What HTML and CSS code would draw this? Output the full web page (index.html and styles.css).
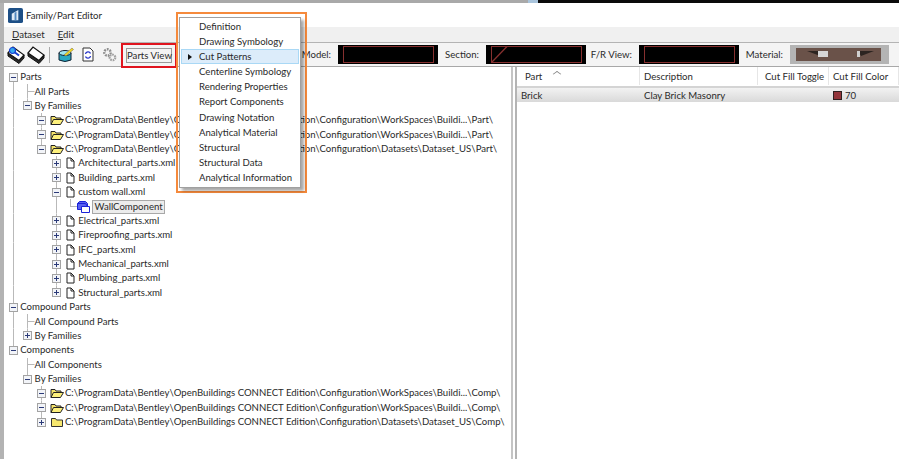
FILE: index.html
```html
<!DOCTYPE html>
<html lang="en">

<head>
    <meta charset="UTF-8">
    <title>Family/Part Editor</title>
    <link rel="stylesheet" href="styles.css">
</head>

<body>
    <svg class="defs" width="0" height="0">
        <symbol id="folderOpen" viewBox="0 0 14 12">
            <path d="M1 10.500V2.500h4l1 1.500h5v2" fill="#f4e36a" stroke="#222" />
            <path d="M1 10.500l2.500-5h10l-3 5z" fill="#fdf07c" stroke="#222" />
        </symbol>
        <symbol id="folderShut" viewBox="0 0 14 12">
            <path d="M1.500 10.500V2.500h4l1 1.500h6v6.500z" fill="#f6e76e" stroke="#333" />
        </symbol>
        <symbol id="file" viewBox="0 0 11 12">
            <path d="M2 1h4l3 3v7H2z" fill="#fff" stroke="#222" />
            <path d="M6 1v3h3" fill="none" stroke="#222" />
        </symbol>
        <symbol id="part" viewBox="0 0 13 12">
            <path d="M.5 2.500l2-2h6l2 2v6h-10z" fill="#5a62f0" stroke="#1a22d8" />
            <path d="M4.500 5.500h8v6h-8z" fill="#fff" stroke="#1a22d8" />
            <path d="M.5 2.500h8l2 3" fill="none" stroke="#1a22d8" />
        </symbol>
        <symbol id="book" viewBox="0 0 18 18">
            <path d="M1 7v3l11 7.500 5-5.500V9l-5 5.500z" fill="#2b2b2b" stroke="#111" />
            <path d="M1 7l5-6 11 8-5 5.500z" fill="#fff" stroke="#111" stroke-width="1.200" />
        </symbol>
    </svg>

    <div class="topstrip">
        <div class="strip_gray"></div>
        <div class="strip_blue"></div>
        <div class="strip_black"></div>
    </div>

    <div class="vindue">
        <header class="titel">
            <svg class="logo" viewBox="0 0 16 16" width="15" height="15">
                <rect width="16" height="16" rx="2" fill="#1d4f86" />
                <path d="M4 13V6l7-4v11z" fill="#dfe9f5" />
                <path d="M7 13V5l2-1v9z" fill="#4f86c0" />
            </svg>
            <span>Family/Part Editor</span>
        </header>

        <nav class="menu">
            <span><u>D</u>ataset</span>
            <span><u>E</u>dit</span>
        </nav>

        <div class="toolbar">
            <svg class="ikon bog_a" width="18" height="18">
                <use href="#book" />
                <circle cx="5.500" cy="4.500" r="3" fill="#35a8f0" stroke="#1540d0" stroke-width="1.200" />
                <path d="M8 6.500l4 3" stroke="#1540d0" stroke-width="2" />
            </svg>
            <svg class="ikon bog_b" width="18" height="18">
                <use href="#book" />
            </svg>
            <div class="skille"></div>
            <svg class="ikon kop" viewBox="0 0 16 16" width="16" height="16">
                <path d="M1 6v7q6 3 12 0V6z" fill="#28a8c0" stroke="#123" />
                <ellipse cx="7" cy="6" rx="6" ry="2.500" fill="#9fe4ee" stroke="#123" />
                <path d="M6 8l8-7 1.500 1.500L8 9z" fill="#f5d820" stroke="#665" stroke-width=".5" />
            </svg>
            <svg class="ikon dok" viewBox="0 0 12 15" width="12" height="15">
                <path d="M1 1h7l3 3v10H1z" fill="#fff" stroke="#333" />
                <path d="M3.500 7a2.600 2.600 0 0 1 5-.5M8.500 9a2.600 2.600 0 0 1-5 .5" fill="none" stroke="#2230c8" stroke-width="1.300" />
            </svg>
            <svg class="ikon tandhjul" viewBox="0 0 15 15" width="15" height="15">
                <circle cx="5.500" cy="5.500" r="3.200" fill="none" stroke="#8d8d8d" stroke-width="2.400" stroke-dasharray="1.800 1" />
                <circle cx="10.500" cy="10.500" r="2.800" fill="none" stroke="#a0a0a0" stroke-width="2.200" stroke-dasharray="1.600 .9" />
            </svg>

            <div class="rod_ramme">
                <button class="partsview">Parts View</button>
            </div>

            <span class="felt model">Model:</span>
            <div class="sort_boks">
                <svg viewBox="0 0 100 19" width="100" height="19">
                    <rect x="5.500" y="1.500" width="90" height="16" fill="none" stroke="#86302f" />
                </svg>
            </div>
            <span class="felt section">Section:</span>
            <div class="sort_boks">
                <svg viewBox="0 0 100 19" width="100" height="19">
                    <rect x="5.500" y="1.500" width="90" height="16" fill="none" stroke="#86302f" />
                    <path d="M5.500 17.500L21 1.500" stroke="#86302f" stroke-width="1.300" />
                </svg>
            </div>
            <span class="felt frview">F/R View:</span>
            <div class="sort_boks">
                <svg viewBox="0 0 100 19" width="100" height="19">
                    <rect x="5.500" y="1.500" width="90" height="16" fill="none" stroke="#86302f" />
                </svg>
            </div>
            <span class="felt material">Material:</span>
            <svg class="materiale" viewBox="0 0 99 19" width="99" height="19">
                <rect width="99" height="19" fill="#b4b4b4" />
                <rect x="6" y="3" width="85" height="13" fill="#6a5249" />
                <path d="M17 6l16 0 0 6z" fill="#2c2420" />
                <rect x="28" y="6" width="10" height="6" fill="#d6d6d6" />
                <path d="M68 6h16l-13 5z" fill="#2c2420" />
                <rect x="67" y="6" width="3" height="6" fill="#cfcfcf" />
            </svg>
        </div>

        <main class="ruder">
            <section class="trae">
                <div class="r"><i class="c down"><b class="boks minus"></b></i><span>Parts</span></div>
                <div class="r"><i class="c v"></i><i class="c t"></i><span>All Parts</span></div>
                <div class="r"><i class="c v"></i><i class="c l0"><b class="boks minus"></b></i><span>By Families</span></div>
                <div class="r"><i class="c v"></i><i class="c"></i><i class="c v"><b class="boks minus"></b></i><svg class="fil_ikon"><use href="#folderOpen" /></svg><span>C:\ProgramData\Bentley\OpenBuildings CONNECT Edition\Configuration\WorkSpaces\Buildi...\Part\</span></div>
                <div class="r"><i class="c v"></i><i class="c"></i><i class="c v"><b class="boks minus"></b></i><svg class="fil_ikon"><use href="#folderOpen" /></svg><span>C:\ProgramData\Bentley\OpenBuildings CONNECT Edition\Configuration\WorkSpaces\Buildi...\Part\</span></div>
                <div class="r"><i class="c v"></i><i class="c"></i><i class="c up"><b class="boks minus"></b></i><svg class="fil_ikon"><use href="#folderOpen" /></svg><span>C:\ProgramData\Bentley\OpenBuildings CONNECT Edition\Configuration\Datasets\Dataset_US\Part\</span></div>
                <div class="r"><i class="c v"></i><i class="c"></i><i class="c"></i><i class="c v"><b class="boks plus"></b></i><svg class="doc_ikon"><use href="#file" /></svg><span>Architectural_parts.xml</span></div>
                <div class="r"><i class="c v"></i><i class="c"></i><i class="c"></i><i class="c v"><b class="boks plus"></b></i><svg class="doc_ikon"><use href="#file" /></svg><span>Building_parts.xml</span></div>
                <div class="r"><i class="c v"></i><i class="c"></i><i class="c"></i><i class="c v"><b class="boks minus"></b></i><svg class="doc_ikon"><use href="#file" /></svg><span>custom wall.xml</span></div>
                <div class="r"><i class="c v"></i><i class="c"></i><i class="c"></i><i class="c v"></i><i class="c l"></i><svg class="part_ikon"><use href="#part" /></svg><span class="valgt">WallComponent</span></div>
                <div class="r"><i class="c v"></i><i class="c"></i><i class="c"></i><i class="c v"><b class="boks plus"></b></i><svg class="doc_ikon"><use href="#file" /></svg><span>Electrical_parts.xml</span></div>
                <div class="r"><i class="c v"></i><i class="c"></i><i class="c"></i><i class="c v"><b class="boks plus"></b></i><svg class="doc_ikon"><use href="#file" /></svg><span>Fireproofing_parts.xml</span></div>
                <div class="r"><i class="c v"></i><i class="c"></i><i class="c"></i><i class="c v"><b class="boks plus"></b></i><svg class="doc_ikon"><use href="#file" /></svg><span>IFC_parts.xml</span></div>
                <div class="r"><i class="c v"></i><i class="c"></i><i class="c"></i><i class="c v"><b class="boks plus"></b></i><svg class="doc_ikon"><use href="#file" /></svg><span>Mechanical_parts.xml</span></div>
                <div class="r"><i class="c v"></i><i class="c"></i><i class="c"></i><i class="c v"><b class="boks plus"></b></i><svg class="doc_ikon"><use href="#file" /></svg><span>Plumbing_parts.xml</span></div>
                <div class="r"><i class="c v"></i><i class="c"></i><i class="c"></i><i class="c up"><b class="boks plus"></b></i><svg class="doc_ikon"><use href="#file" /></svg><span>Structural_parts.xml</span></div>
                <div class="r"><i class="c v"><b class="boks minus"></b></i><span>Compound Parts</span></div>
                <div class="r"><i class="c v"></i><i class="c t"></i><span>All Compound Parts</span></div>
                <div class="r"><i class="c v"></i><i class="c l0"><b class="boks plus"></b></i><span>By Families</span></div>
                <div class="r"><i class="c up"><b class="boks minus"></b></i><span>Components</span></div>
                <div class="r"><i class="c"></i><i class="c t"></i><span>All Components</span></div>
                <div class="r"><i class="c"></i><i class="c l0"><b class="boks minus"></b></i><span>By Families</span></div>
                <div class="r"><i class="c"></i><i class="c"></i><i class="c v"><b class="boks minus"></b></i><svg class="fil_ikon"><use href="#folderOpen" /></svg><span>C:\ProgramData\Bentley\OpenBuildings CONNECT Edition\Configuration\WorkSpaces\Buildi...\Comp\</span></div>
                <div class="r"><i class="c"></i><i class="c"></i><i class="c v"><b class="boks minus"></b></i><svg class="fil_ikon"><use href="#folderOpen" /></svg><span>C:\ProgramData\Bentley\OpenBuildings CONNECT Edition\Configuration\WorkSpaces\Buildi...\Comp\</span></div>
                <div class="r"><i class="c"></i><i class="c"></i><i class="c up"><b class="boks plus"></b></i><svg class="fil_ikon"><use href="#folderShut" /></svg><span>C:\ProgramData\Bentley\OpenBuildings CONNECT Edition\Configuration\Datasets\Dataset_US\Comp\</span></div>
            </section>

            <div class="splitter"></div>

            <section class="liste">
                <div class="kolonner hoved">
                    <div class="kol_part">Part <span class="pil"></span></div>
                    <div class="kol_desc">Description</div>
                    <div class="kol_tog">Cut Fill Toggle</div>
                    <div class="kol_col">Cut Fill Color</div>
                </div>
                <div class="kolonner raekke">
                    <div class="kol_part">Brick</div>
                    <div class="kol_desc">Clay Brick Masonry</div>
                    <div class="kol_tog"></div>
                    <div class="kol_col"><span class="farve"></span>70</div>
                </div>
            </section>
        </main>
    </div>

    <!-- dropdown fra Parts View knappen -->
    <div class="orange_ramme">
        <ul class="dropdown">
            <li>Definition</li>
            <li>Drawing Symbology</li>
            <li class="aktiv">Cut Patterns</li>
            <li>Centerline Symbology</li>
            <li>Rendering Properties</li>
            <li>Report Components</li>
            <li>Drawing Notation</li>
            <li>Analytical Material</li>
            <li>Structural</li>
            <li>Structural Data</li>
            <li>Analytical Information</li>
        </ul>
    </div>
</body>

</html>
```

FILE: styles.css
```css
* {
    margin: 0;
    padding: 0;
    box-sizing: border-box;
}

body {
    width: 899px;
    height: 459px;
    overflow: hidden;
    display: flex;
    flex-direction: column;
    background: #fff;
    color: #2a2a2a;
    font-family: Lato, sans-serif;
    font-size: 9.6px;
}

.defs {
    display: block;
    height: 0;
}

.topstrip {
    display: flex;
    height: 3px;
    flex: none;
}

.strip_gray {
    width: 528px;
    background: #a9a9a9;
}

.strip_blue {
    width: 10px;
    background: #a9c4dc;
}

.strip_black {
    flex: 1;
    background: #0b0b0b;
}

.vindue {
    flex: 1;
    min-height: 0;
    display: flex;
    flex-direction: column;
    border-left: 4px solid #b3b3b3;
}

.titel {
    height: 24px;
    flex: none;
    display: flex;
    align-items: center;
    gap: 3px;
    padding: 0 0 0 4px;
}

.menu {
    height: 15px;
    flex: none;
    display: flex;
    align-items: center;
    gap: 13px;
    padding-left: 8px;
    background: #f0f0f0;
}

.toolbar {
    height: 25px;
    flex: none;
    display: flex;
    align-items: center;
    background: #f4f4f4;
    border-top: 1px solid #b4b4b4;
    border-bottom: 1px solid #a8a8a8;
}

.ikon {
    flex: none;
}

.bog_a {
    margin-left: 3px;
}

.bog_b {
    margin-left: 2px;
}

.skille {
    width: 1px;
    height: 16px;
    margin: 0 8px 0 4px;
    background: #aaa;
}

.dok {
    margin-left: 8px;
}

.tandhjul {
    margin-left: 8px;
}

.rod_ramme {
    width: 56px;
    height: 25px;
    margin-left: 4px;
    display: flex;
    align-items: center;
    justify-content: center;
    border: 2px solid #e0141e;
    margin-top: 1px;
    flex: none;
}

.partsview {
    width: 46px;
    height: 15px;
    border: 1px solid #9a9a9a;
    background: #f4f4f4;
    color: #2a2a2a;
    font: 9.6px Lato, sans-serif;
    white-space: nowrap;
}

/* labels staar hoejrestillet saa de sorte felter holder deres plads */
.felt {
    flex: none;
    margin-right: 7px;
    text-align: right;
    white-space: nowrap;
}

.model {
    width: 154px;
}

.section {
    width: 41px;
}

.frview {
    width: 46px;
}

.material {
    width: 44px;
}

.sort_boks {
    width: 100px;
    height: 19px;
    flex: none;
    background: #000;
}

.sort_boks svg,
.materiale {
    display: block;
    flex: none;
}

.ruder {
    flex: 1;
    min-height: 0;
    display: flex;
}

.trae {
    width: 507px;
    flex: none;
    padding: 3px 0 0 2px;
}

.r {
    height: 14.375px;
    display: flex;
    align-items: center;
    white-space: nowrap;
    line-height: 14px;
}

/* traeets linjer tegnes som baggrunde i hver celle */
.c {
    --linje: linear-gradient(#b9b9b9, #b9b9b9);
    width: 14.3px;
    height: 14.375px;
    flex: none;
    display: flex;
    align-items: center;
    justify-content: center;
    background-repeat: no-repeat;
}

.v {
    background-image: var(--linje);
    background-size: 1px 100%;
    background-position: center;
}

.down {
    background-image: var(--linje);
    background-size: 1px 50%;
    background-position: center bottom;
}

.up {
    background-image: var(--linje);
    background-size: 1px 50%;
    background-position: center top;
}

.t {
    background-image: var(--linje), var(--linje);
    background-size: 1px 100%, 50% 1px;
    background-position: center, right center;
}

.l {
    background-image: var(--linje), var(--linje);
    background-size: 1px 50%, 50% 1px;
    background-position: center top, right center;
}

.l0 {
    background-image: var(--linje);
    background-size: 1px 50%;
    background-position: center top;
}

.boks {
    width: 9px;
    height: 9px;
    border: 1px solid #a3a3a3;
    background-color: #f2f4f8;
    background-repeat: no-repeat;
    background-position: center;
}

.minus {
    background-image: linear-gradient(#2b3a78, #2b3a78);
    background-size: 5px 1px;
}

.plus {
    background-image: linear-gradient(#2b3a78, #2b3a78), linear-gradient(#2b3a78, #2b3a78);
    background-size: 5px 1px, 1px 5px;
}

.fil_ikon {
    width: 14px;
    height: 12px;
    margin: 0 1px 0 1px;
    flex: none;
}

.doc_ikon {
    width: 11px;
    height: 12px;
    margin: 0 2px 0 2px;
    flex: none;
}

.part_ikon {
    width: 13px;
    height: 12px;
    margin-right: 2px;
    flex: none;
}

.valgt {
    padding: 0 1px;
    background: #ececec;
    border: 1px solid #a8a8a8;
    line-height: 12px;
}

.splitter {
    width: 6px;
    flex: none;
    border-left: 2px solid #c4c4c4;
    border-right: 2px solid #b4b4b4;
}

.liste {
    flex: 1;
}

.kolonner {
    display: grid;
    grid-template-columns: 123px 118px 71px 1fr;
}

.hoved {
    height: 21px;
    align-items: center;
    border-bottom: 2px solid #d4d4d4;
    padding-bottom: 1px;
}

.hoved div {
    height: 100%;
    display: flex;
    align-items: center;
    gap: 12px;
    padding-left: 4px;
    border-right: 1px solid #e6e6e6;
}

.hoved .kol_part {
    padding-left: 8px;
}

.hoved .kol_tog {
    padding-left: 7px;
}

.pil {
    width: 6px;
    height: 6px;
    margin-bottom: 4px;
    border-left: 1px solid #888;
    border-top: 1px solid #888;
    transform: scaleY(.7) rotate(45deg);
}

.raekke {
    height: 14px;
    align-items: center;
    background: linear-gradient(#f2f2f2, #d9d9d9);
}

.raekke div {
    padding-left: 4px;
    display: flex;
    align-items: center;
    gap: 3px;
}

.farve {
    width: 9px;
    height: 9px;
    background: #93343a;
    border: 1px solid #2e2020;
}

/* dropdown og orange markering ligger ovenpaa vinduet */
.orange_ramme {
    position: absolute;
    left: 176px;
    top: 12px;
    width: 131px;
    height: 181px;
    padding: 3px 0 0 1px;
    border: 2px solid #f58a3c;
}

.dropdown {
    width: 122px;
    height: 171px;
    list-style: none;
    background: #fff;
    border: 1px solid #a0a0a0;
    box-shadow: 3px 3px 3px rgba(0, 0, 0, .35);
    padding-top: 1px;
}

.dropdown li {
    height: 15.1px;
    line-height: 15px;
    padding-left: 18px;
    margin: 0 1px;
    white-space: nowrap;
}

.aktiv {
    background: #dcecfa;
    outline: 1px solid #a9d8f5;
    outline-offset: -1px;
    display: flex;
    align-items: center;
    gap: 7px;
    padding-left: 7px !important;
}

.aktiv::before {
    content: "";
    border-left: 4px solid #111;
    border-top: 3px solid transparent;
    border-bottom: 3px solid transparent;
}
```
